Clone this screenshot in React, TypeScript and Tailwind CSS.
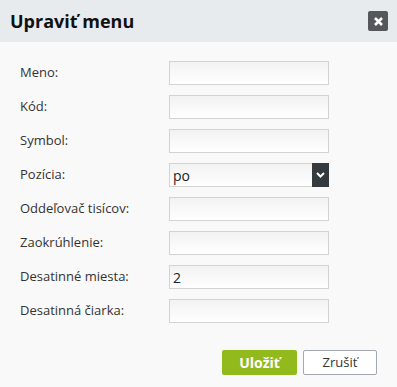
import React from "react";

const rows: { label: string; value?: string; select?: boolean }[] = [
  { label: "Meno:" },
  { label: "Kód:" },
  { label: "Symbol:" },
  { label: "Pozícia:", value: "po", select: true },
  { label: "Oddeľovač tisícov:" },
  { label: "Zaokrúhlenie:" },
  { label: "Desatinné miesta:", value: "2" },
  { label: "Desatinná čiarka:" },
];

export default function App() {
  return (
    <div
      className="w-[397px] h-[387px] bg-[#f9f9f9] flex flex-col"
      style={{ fontFamily: '"Open Sans", "Noto Sans", sans-serif' }}
    >
      <div className="h-[42px] bg-[#e8ebee] flex items-center justify-between pl-[10px] pr-[9px]">
        <span className="text-[18px] font-bold text-[#111] leading-none">Upraviť menu</span>
        <div className="w-[20px] h-[20px] rounded-[2px] bg-[#54585d] flex items-center justify-center">
          <svg width="9" height="9" viewBox="0 0 9 9">
            <path d="M1 1 L8 8 M8 1 L1 8" stroke="#fff" strokeWidth="2.6" strokeLinecap="butt" />
          </svg>
        </div>
      </div>
      <div className="flex flex-col gap-[10px] pt-[19px] pl-[20px]">
        {rows.map((r) => (
          <div key={r.label} className="flex items-center h-[24px]">
            <div className="w-[149px] text-[13px] text-[#333]">{r.label}</div>
            <div className="relative w-[160px] h-[24px] border border-[#d3d3d3] bg-linear-to-b from-[#f2f2f2] to-white flex items-center pl-[3px] text-[14px] text-[#222]">
              {r.value}
              {r.select && (
                <div className="absolute right-[-1px] top-[-1px] bottom-[-1px] w-[17px] bg-[#353a3e] flex items-center justify-center">
                  <svg width="9" height="6" viewBox="0 0 9 6">
                    <path d="M1 1 L4.5 4.5 L8 1" stroke="#fff" strokeWidth="2" fill="none" />
                  </svg>
                </div>
              )}
            </div>
          </div>
        ))}
      </div>
      <div className="flex justify-end gap-[6px] pr-[20px] mt-[27px]">
        <button className="w-[75px] h-[25px] rounded-[2px] bg-[#92ba1c] text-white font-bold text-[14px] flex items-center justify-center">
          Uložiť
        </button>
        <button className="w-[74px] h-[25px] rounded-[2px] bg-white border border-[#a3a7b0] text-[#333] text-[13px] flex items-center justify-center">
          Zrušiť
        </button>
      </div>
    </div>
  );
}
